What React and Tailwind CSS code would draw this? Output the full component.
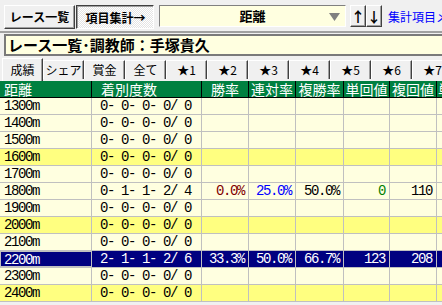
import React from "react";

const jp = { fontFamily: '"Noto Sans CJK JP", "Noto Sans", sans-serif' };
const mono = { fontFamily: '"Liberation Mono", "Noto Sans CJK JP", monospace' };

const rows = [
  { d: "1300m", r: "0- 0- 0- 0/ 0" },
  { d: "1400m", r: "0- 0- 0- 0/ 0" },
  { d: "1500m", r: "0- 0- 0- 0/ 0" },
  { d: "1600m", r: "0- 0- 0- 0/ 0", hi: true },
  { d: "1700m", r: "0- 0- 0- 0/ 0" },
  {
    d: "1800m",
    r: "0- 1- 1- 2/ 4",
    v: [
      ["0.0%", "text-[#800000]"],
      ["25.0%", "text-[#0000ff]"],
      ["50.0%", "text-black"],
      ["0", "text-[#008000]"],
      ["110", "text-black"],
    ],
  },
  { d: "1900m", r: "0- 0- 0- 0/ 0" },
  { d: "2000m", r: "0- 0- 0- 0/ 0", hi: true },
  { d: "2100m", r: "0- 0- 0- 0/ 0" },
  {
    d: "2200m",
    r: "2- 1- 1- 2/ 6",
    sel: true,
    v: [
      ["33.3%", "text-white"],
      ["50.0%", "text-white"],
      ["66.7%", "text-white"],
      ["123", "text-white"],
      ["208", "text-white"],
    ],
  },
  { d: "2300m", r: "0- 0- 0- 0/ 0" },
  { d: "2400m", r: "0- 0- 0- 0/ 0", hi: true },
];

const statW = ["w-[47px]", "w-[47px]", "w-[48px]", "w-[46px]", "w-[47px]"];
const tabs = ["シェア", "賞金", "全て", "★1", "★2", "★3", "★4", "★5", "★6", "★7"];

export default function App() {
  return (
    <div className="w-[442px] h-[305px] overflow-hidden bg-[#f0f0f0] text-black" style={jp}>
      {/* toolbar */}
      <div className="flex h-[31px] items-start pt-[5px] pl-[4px]">
        <button className="flex h-[24px] w-[71px] shrink-0 items-center justify-center whitespace-nowrap border border-t-white border-l-white border-r-[#404040] border-b-[#404040] bg-[#f0f0f0] text-[12px] font-bold shadow-[inset_-1px_-1px_#a0a0a0]">
          レース一覧
        </button>
        <button className="ml-[1px] flex h-[24px] w-[78px] shrink-0 items-center justify-center whitespace-nowrap border border-t-[#404040] border-l-[#404040] border-r-white border-b-white bg-[repeating-conic-gradient(#ffffff_0_25%,#e4e4e4_0_50%)] bg-[length:2px_2px] pt-[1px] pl-[1px] text-[12px] font-bold shadow-[inset_1px_1px_#a0a0a0]">
          項目集計→
        </button>
        <div className="relative ml-[5px] flex h-[22px] w-[187px] shrink-0 items-center justify-center border border-t-[#808080] border-l-[#808080] border-r-white border-b-white bg-[#ffffe0] text-[13px] font-bold">
          距離
          <svg className="absolute right-[5px] top-[7px]" width="11" height="8" viewBox="0 0 11 8">
            <polygon points="0,0 11,0 5.5,8" fill="#808080" />
          </svg>
        </div>
        <button className="ml-[4px] flex h-[22px] w-[16px] shrink-0 items-center justify-center border border-t-white border-l-white border-r-[#404040] border-b-[#404040] bg-[#f0f0f0] text-[14px] font-bold shadow-[inset_-1px_-1px_#a0a0a0]">
          ↑
        </button>
        <button className="flex h-[22px] w-[16px] shrink-0 items-center justify-center border border-t-white border-l-white border-r-[#404040] border-b-[#404040] bg-[#f0f0f0] text-[14px] font-bold shadow-[inset_-1px_-1px_#a0a0a0]">
          ↓
        </button>
        <div className="ml-[6px] mt-[3px] whitespace-nowrap text-[12px] text-[#0000ff]">集計項目メニュー</div>
      </div>
      <div className="h-[2px] bg-[#a0a0a0]" />

      {/* title */}
      <div className="mt-[1px] ml-[4px] flex h-[22px] items-center border-2 border-r-0 border-[#7a7a7a] bg-[#ffffe0] pl-[2px] text-[15px] font-bold whitespace-nowrap">
        レース一覧･調教師：手塚貴久
      </div>

      {/* tabs */}
      <div className="mt-[2px] flex h-[23px] items-end pl-[2px] text-[12px]">
        <div className="flex h-[23px] w-[41px] shrink-0 items-start justify-center border-t border-l border-r border-t-white border-l-white border-r-[#404040] bg-[#f0f0f0] pt-[2px] shadow-[inset_-1px_0_#a0a0a0]">
          成績
        </div>
        {tabs.map((t) => (
          <div
            key={t}
            className="mb-[2px] flex h-[19px] w-[41px] shrink-0 items-center justify-center whitespace-nowrap border-t border-l border-r border-t-white border-l-white border-r-[#404040] bg-[#f0f0f0] shadow-[inset_-1px_0_#a0a0a0]"
          >
            {t}
          </div>
        ))}
      </div>

      {/* grid */}
      <div className="bg-[#ffffe0]">
        <div className="flex h-[17px] border-b border-black bg-[#008040] text-[14px] leading-[16px] text-white whitespace-nowrap">
          <div className="w-[92px] shrink-0 border-r border-black pl-[4px]">距離</div>
          <div className="w-[110px] shrink-0 border-r border-black pl-[9px]">着別度数</div>
          <div className="w-[47px] shrink-0 border-r border-black text-center">勝率</div>
          <div className="w-[47px] shrink-0 border-r border-black text-center">連対率</div>
          <div className="w-[48px] shrink-0 border-r border-black text-center">複勝率</div>
          <div className="w-[46px] shrink-0 border-r border-black text-center">単回値</div>
          <div className="w-[47px] shrink-0 border-r border-black text-center">複回値</div>
          <div className="min-w-0 flex-1 overflow-hidden pl-[1px]">単</div>
        </div>
        {rows.map((row) => {
          const bg = row.sel ? "bg-[#000080] text-white" : row.hi ? "bg-[#ffff80]" : "bg-[#ffffe0]";
          return (
            <div
              key={row.d}
              className={`flex h-[17px] border-b border-[#c0c0c0] text-[14px] leading-[16px] tracking-[-1.4px] whitespace-pre ${bg}`}
              style={mono}
            >
              <div
                className={`w-[92px] shrink-0 border-r border-[#c0c0c0] ${
                  row.sel ? "border border-[#b01010] pl-[3px]" : "pl-[4px]"
                }`}
              >
                {row.d}
              </div>
              <div className="w-[110px] shrink-0 border-r border-[#c0c0c0] pl-[8px]">{row.r}</div>
              {statW.map((w, i) => (
                <div key={i} className={`${w} shrink-0 border-r border-[#c0c0c0] pr-[4px] text-right`}>
                  {row.v ? <span className={row.v[i][1]}>{row.v[i][0]}</span> : null}
                </div>
              ))}
              <div className="flex-1" />
            </div>
          );
        })}
      </div>
    </div>
  );
}
